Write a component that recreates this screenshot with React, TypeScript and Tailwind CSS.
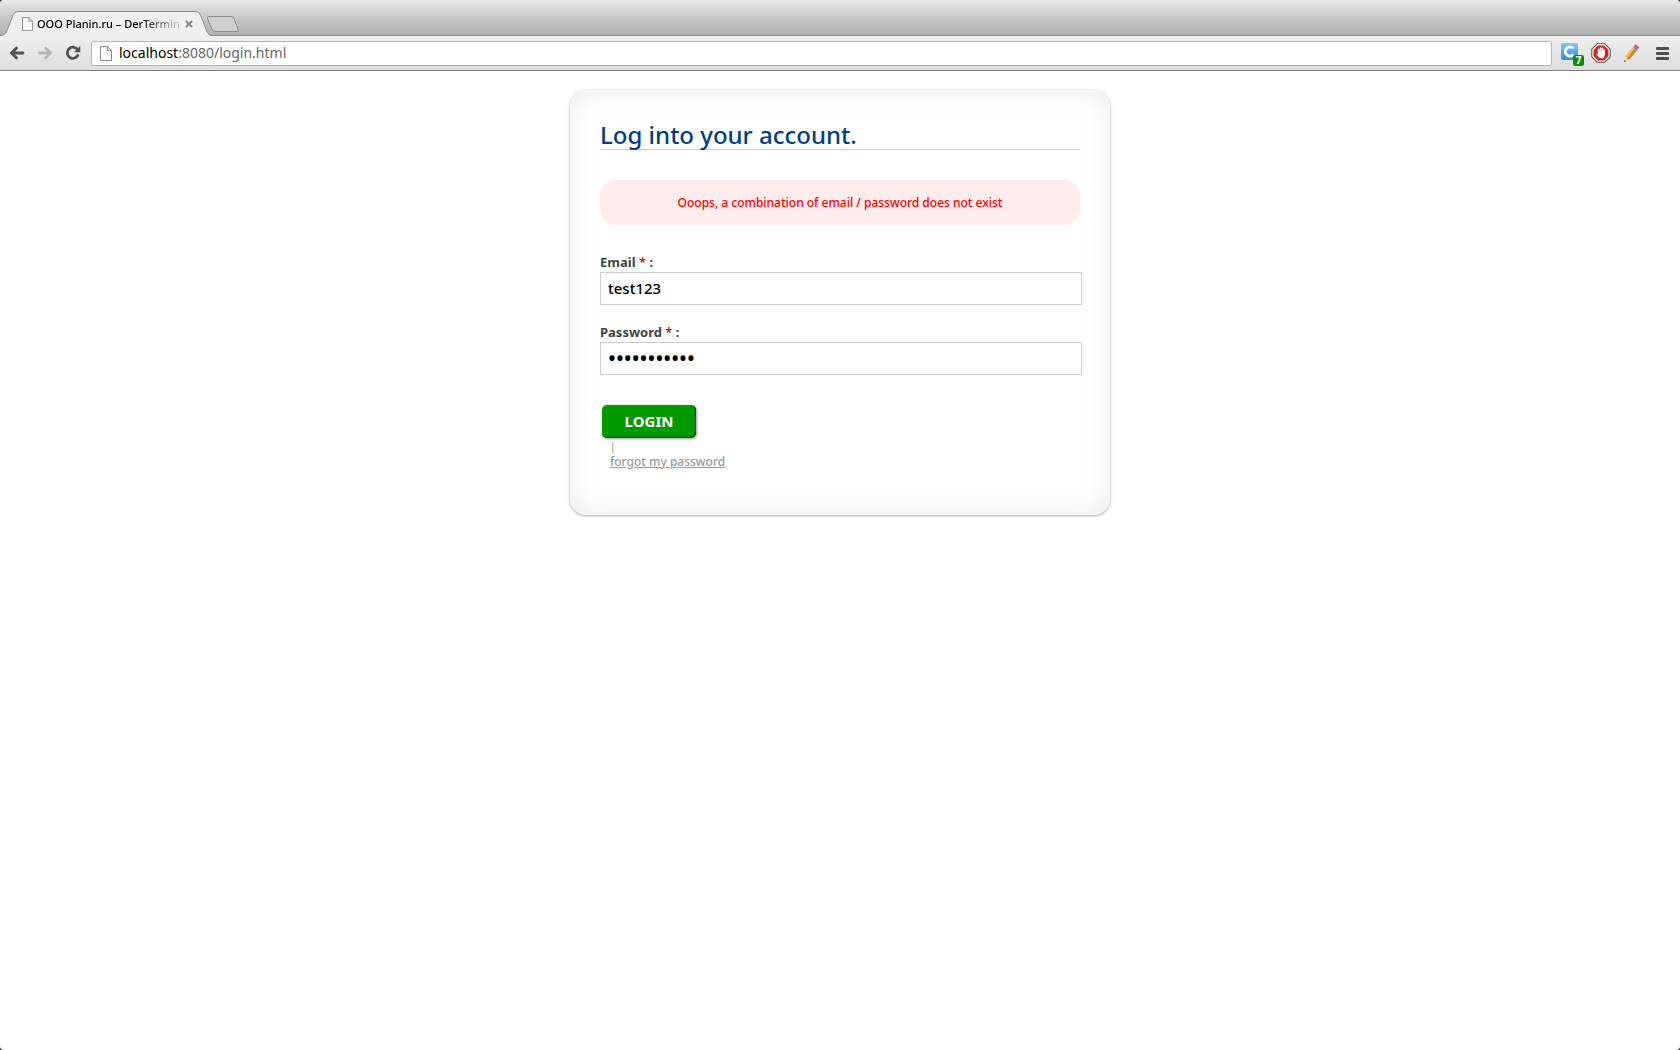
import { useState } from "react";

function PageIcon({ className }: { className: string }) {
  return (
    <svg className={className} viewBox="0 0 12 15" fill="#fafafa" stroke="#8f8f8f" strokeWidth="1" aria-hidden="true">
      <path d="M.5.5h7l4 4v10H.5z" />
      <path d="M7.5.5v4h4" fill="none" />
    </svg>
  );
}

function ArrowIcon({ className }: { className: string }) {
  return (
    <svg className={className} viewBox="0 0 16 14" fill="none" stroke="currentColor" strokeWidth="2.8" strokeLinecap="round" aria-hidden="true">
      <path d="M14 7H3" />
      <path d="M7.500 2L2.500 7l5 5" strokeLinejoin="miter" />
    </svg>
  );
}

function ReloadIcon() {
  return (
    <svg className="h-4 w-4" viewBox="0 0 16 16" aria-hidden="true">
      <path d="M12.200 4.200A5.600 5.600 0 1 0 12.800 10.500" fill="none" stroke="#505050" strokeWidth="2.700" strokeLinecap="round" />
      <path d="M15.300.8v6.400H8.900z" fill="#505050" />
    </svg>
  );
}

function TabStrip() {
  return (
    <div className="flex h-9 items-end bg-linear-to-b from-[#e8e8e8] via-[#c8c8c8] to-[#aeaeae] shadow-[inset_0_-1px_0_#8e8e8e]">
      <div className="relative flex h-[25px] w-[212px] items-center pl-[22px]" role="tab" aria-selected="true">
        <svg className="absolute inset-0 h-[25px] w-[212px]" viewBox="0 0 212 25" aria-hidden="true">
          <path d="M0 25C6 24 6 22 8 17L13 4Q14.500.5 18 .5H196Q199 .5 200.500 4L206 18Q208 24.500 212 25Z" fill="#efefef" />
          <path d="M0 24.500C6 24 6 22 8 17L13 4Q14.500 .5 18 .5H196Q199 .5 200.500 4L206 18Q208 24.500 212 24.500" fill="none" stroke="#8c8c8c" />
        </svg>
        <PageIcon className="relative h-[14px] w-[11px]" />
        <span className="relative ml-1 w-36 bg-linear-to-r from-black from-70% to-black/10 bg-clip-text text-[11px] leading-4 font-medium whitespace-nowrap text-transparent">
          OOO Planin.ru – DerTermin
        </span>
        <button type="button" aria-label="Close tab" className="relative flex h-4 w-4 items-center justify-center">
          <svg className="h-2 w-2" viewBox="0 0 8 8" stroke="#7c7c7c" strokeWidth="1.7" aria-hidden="true">
            <path d="M.8.8l6.400 6.400M7.200.8L.8 7.200" />
          </svg>
        </button>
      </div>
      <button type="button" aria-label="New tab" className="mb-[3px] -ml-1.5">
        <svg className="h-[17px] w-[34px]" viewBox="0 0 34 17" aria-hidden="true">
          <path d="M3 .5H25Q27 .5 28 2.500L32 13Q33 15.500 31 15.500H10Q7 15.500 6 13L1.500 3Q.5 .5 3 .5Z" fill="#cfcfcf" stroke="#8c8c8c" />
        </svg>
      </button>
    </div>
  );
}

function Extensions() {
  return (
    <div className="flex items-center">
      <button type="button" aria-label="Clipboard extension" className="ml-2 pt-0.5">
        <svg className="h-6 w-6" viewBox="0 0 24 24" aria-hidden="true">
          <defs>
            <linearGradient id="blue" x1="0" y1="0" x2="0" y2="1">
              <stop offset="0" stopColor="#84c6f0" />
              <stop offset="1" stopColor="#2f8fdc" />
            </linearGradient>
          </defs>
          <rect x="1" y="1" width="17" height="17" rx="2" fill="url(#blue)" />
          <path d="M13.500 6.700A4.600 4.600 0 1 0 13.500 12.300" fill="none" stroke="#fff" strokeWidth="2.800" />
          <rect x="13" y="13" width="11" height="11" rx="2" fill="#0a8f0a" />
          <text x="18.500" y="22" textAnchor="middle" fontSize="10" fontWeight="700" fill="#fff">7</text>
        </svg>
      </button>
      <button type="button" aria-label="Ad blocker" className="ml-[7px]">
        <svg className="h-5 w-5" viewBox="0 0 20 20" aria-hidden="true">
          <path d="M6.200.8h7.600l5.400 5.400v7.600l-5.400 5.400H6.200L.8 13.800V6.200z" fill="#fff" stroke="#555" strokeWidth="1.100" />
          <path d="M6.900 2.600h6.200l4.300 4.300v6.200l-4.300 4.300H6.900l-4.300-4.300V6.900z" fill="#dc1c1c" />
          <path d="M7.600 11V6.300M9.400 10V4.900M11.200 10V5.100M13 11V6.500" stroke="#fff" strokeWidth="1.500" strokeLinecap="round" />
          <path d="M6.900 8.500h6.800v3.200c0 2.500-1 3.600-3.200 3.600-2.200 0-3.400-1.300-5.300-4.300l.8-.5 1.300 1z" fill="#fff" />
        </svg>
      </button>
      <button type="button" aria-label="Edit extension" className="ml-3">
        <svg className="h-[19px] w-[17px]" viewBox="0 0 17 19" aria-hidden="true">
          <path d="M1 18l1.400-5.500 3.600 3.300z" fill="#ecd3ab" />
          <path d="M1 18l.5-2 1.300 1.200z" fill="#444" />
          <path d="M2.400 12.500L10 3.300l3.800 3.200L6 15.800z" fill="#eda73d" />
          <path d="M4.300 14.200l7.700-9.300 1.800 1.600L6 15.800z" fill="#c98630" />
          <path d="M3.300 13.100L10.700 4" stroke="#f9cf70" strokeWidth="1" />
          <path d="M10 3.300l1.300-1.500 3.800 3.200-1.300 1.500z" fill="#85899a" />
          <path d="M11.300 1.800L12.700.3 16.500 3.500 15.100 5z" fill="#c94f78" />
        </svg>
      </button>
      <button type="button" aria-label="Menu" className="mr-[11px] ml-4">
        <svg className="h-[13px] w-[13px]" viewBox="0 0 13 13" fill="#4d4d4d" aria-hidden="true">
          <rect width="13" height="3" rx="1" />
          <rect y="5" width="13" height="3" rx="1" />
          <rect y="10" width="13" height="3" rx="1" />
        </svg>
      </button>
    </div>
  );
}

function Toolbar() {
  return (
    <div className="flex h-[35px] items-center border-b border-[#7d7d7d] bg-linear-to-b from-[#efefef] to-[#dedede]">
      <button type="button" aria-label="Back" className="ml-[9px] text-[#505050]">
        <ArrowIcon className="h-[14px] w-4" />
      </button>
      <button type="button" aria-label="Forward" disabled className="ml-3 text-[#b7b7b7]">
        <ArrowIcon className="h-[14px] w-4 rotate-180" />
      </button>
      <button type="button" aria-label="Reload" className="ml-3">
        <ReloadIcon />
      </button>
      <div className="ml-2.5 flex h-[25px] flex-1 items-center rounded-xs border border-[#b4b4b4] bg-white pl-2">
        <PageIcon className="h-[15px] w-3" />
        <div className="ml-[7px] text-[14px] leading-5 text-[#666]">
          <span className="text-black">localhost</span>:8080/login.html
        </div>
      </div>
      <Extensions />
    </div>
  );
}

type FieldProps = {
  id: string;
  label: string;
  type: "text" | "password";
  value: string;
  onChange: (value: string) => void;
};

function Field({ id, label, type, value, onChange }: FieldProps) {
  const textSize = type === "password" ? "text-[21px]" : "text-[15px]";
  return (
    <div className="-mr-0.5">
      <label htmlFor={id} className="block text-[13px] leading-5 font-bold text-[#444]">
        {label} <span className="font-medium text-[#a01010]">*</span> :
      </label>
      <input
        id={id}
        type={type}
        value={value}
        onChange={(e) => onChange(e.target.value)}
        className={`block h-[33px] w-full border border-[#ccc] bg-white px-[7px] pb-0.5 font-medium text-black outline-none ${textSize}`}
      />
    </div>
  );
}

function LoginCard() {
  const [email, setEmail] = useState("test123");
  const [password, setPassword] = useState("secretpass1");

  return (
    <main className="mx-auto mt-[19px] w-full max-w-[540px] rounded-2xl bg-white px-[30px] pt-[30px] pb-[45px] shadow-[0_1px_3px_#aaa,inset_0_0_30px_#ebebeb]">
      <h1 className="border-b border-[#ccc] text-2xl leading-[29px] font-medium text-[#004080]">Log into your account.</h1>
      <p role="alert" className="mt-[30px] rounded-2xl bg-[#ffeded] text-center text-[12px] leading-[45px] font-medium text-[#f00]">
        Ooops, a combination of email / password does not exist
      </p>
      <form className="mt-[27px]" onSubmit={(e) => e.preventDefault()}>
        <div className="flex flex-col gap-[17px]">
          <Field id="email" label="Email" type="text" value={email} onChange={setEmail} />
          <Field id="password" label="Password" type="password" value={password} onChange={setPassword} />
        </div>
        <button
          type="submit"
          className="mt-[30px] ml-0.5 block h-[33px] w-[94px] rounded-[5px] bg-[#090] text-[15px] font-bold text-white shadow-[inset_-1px_-1px_1px_#040,1px_1px_3px_#999]"
        >
          LOGIN
        </button>
        <div className="ml-2.5 text-[12px] leading-4 font-medium text-[#999]">
          <div className="text-[10px]">|</div>
          <a href="#forgot" className="underline">forgot my password</a>
        </div>
      </form>
    </main>
  );
}

export default function App() {
  return (
    <div className="bg-[#2c2c34]">
      <div className="min-h-screen overflow-hidden rounded-sm bg-white font-['Noto_Sans',sans-serif]">
        <header>
          <TabStrip />
          <Toolbar />
        </header>
        <LoginCard />
      </div>
    </div>
  );
}
